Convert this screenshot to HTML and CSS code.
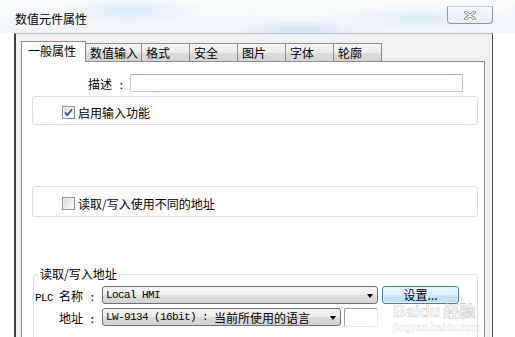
FILE: index.html
```html
<!DOCTYPE html>
<html lang="zh-CN">
<head>
    <meta charset="UTF-8">
    <title>数值元件属性</title>
    <link rel="stylesheet" href="styles.css">
</head>
<body>
<div class="titlebar">
    <div class="title">数值元件属性</div>
    <div class="close-btn">
        <svg width="12" height="9" viewBox="0 0 12 9">
            <path d="M1.5 1 L10.5 8 M10.5 1 L1.5 8" stroke="#7e848a" stroke-width="3" stroke-linecap="round"/>
            <path d="M1.5 1 L10.5 8 M10.5 1 L1.5 8" stroke="#ffffff" stroke-width="1.3" stroke-linecap="round"/>
        </svg>
    </div>
</div>

<div class="window">
    <div class="tabs">
        <div class="tab active">一般属性</div>
        <div class="tab">数值输入</div>
        <div class="tab">格式</div>
        <div class="tab">安全</div>
        <div class="tab">图片</div>
        <div class="tab">字体</div>
        <div class="tab">轮廓</div>
    </div>

    <div class="panel">
        <div class="desc-row">
            <span class="desc-label">描述<span class="mono"> :</span></span>
            <div class="textbox desc-input"></div>
        </div>

        <!-- 启用输入 -->
        <div class="group group-enable">
            <div class="check-row">
                <span class="checkbox">
                    <svg width="13" height="13" viewBox="0 0 13 13">
                        <path d="M3 6.5 L5.3 9.2 L10 3.3" fill="none" stroke="#2f4f8f" stroke-width="1.8"/>
                    </svg>
                </span>
                <span>启用输入功能</span>
            </div>
        </div>

        <div class="group group-addr">
            <div class="check-row">
                <span class="checkbox"></span>
                <span>读取/写入使用不同的地址</span>
            </div>
        </div>

        <fieldset class="addr-set">
            <legend>读取/写入地址</legend>
            <div class="field-row">
                <span class="field-label"><span class="mono">PLC </span>名称<span class="mono"> :</span></span>
                <div class="combo combo-plc"><span class="mono">Local HMI</span><i class="arrow"></i></div>
                <div class="btn-set">设置...</div>
            </div>
            <div class="field-row">
                <span class="field-label">地址<span class="mono"> :</span></span>
                <div class="combo combo-addr"><span class="mono">LW-9134 (16bit) : </span>当前所使用的语言<i class="arrow"></i></div>
                <div class="textbox addr-extra"></div>
            </div>
        </fieldset>
    </div>
</div>

<div class="watermark">
    <div class="wm-logo">Bai<span class="wm-du">du</span><span class="wm-cn">经验</span></div>
    <div class="wm-url">jingyan.baidu.com</div>
</div>
</body>
</html>
```

FILE: styles.css
```css
body {
    margin: 0;
    width: 515px;
    height: 337px;
    overflow: hidden;
    position: relative;
    background: #fff;
    font-family: "Noto Sans CJK SC", sans-serif;
    font-size: 12px;
    color: #000;
}

.mono {
    font-family: "Liberation Mono", monospace;
    font-size: 11px;
    letter-spacing: -0.6px;
    white-space: pre;
}

/* barre de titre */
.titlebar {
    position: relative;
    height: 33px;
    background:
        radial-gradient(ellipse 70px 14px at 130px 10px, rgba(178, 208, 235, 0.45), transparent),
        radial-gradient(ellipse 60px 10px at 300px 30px, rgba(170, 200, 230, 0.45), transparent),
        radial-gradient(ellipse 90px 12px at 420px 18px, rgba(200, 222, 240, 0.5), transparent),
        linear-gradient(#fbfdfe, #eef5fa);
}

.title {
    padding: 10px 0 0 15px;
    line-height: 17px;
}

.close-btn {
    position: absolute;
    left: 447px;
    top: 6px;
    width: 46px;
    height: 18px;
    box-sizing: border-box;
    border: 1px solid #8d9aa5;
    border-top-color: #c5d0d8;
    border-radius: 0 0 4px 4px;
    background: linear-gradient(#f7fafc, #e6eef4);
    display: flex;
    align-items: center;
    justify-content: center;
}

/* fenêtre */
.window {
    margin-left: 14px;
    width: 479px;
    height: 304px;
    box-sizing: border-box;
    border-top: 1px solid #b8bec4;
    border-left: 2px solid #3f3f3f;
    border-right: 1px solid #4a4a4a;
    background: #f0f0f0;
    padding: 7px 0 0 5px;
    overflow: hidden;
}

.tabs {
    display: flex;
    align-items: flex-end;
    height: 20px;
}

.tab {
    box-sizing: border-box;
    height: 18px;
    min-width: 49px;
    padding: 0 3px 0 4px;
    margin-left: -1px;
    border: 1px solid #898c95;
    border-bottom: 0;
    line-height: 17px;
    white-space: nowrap;
    background: linear-gradient(#f4f4f4, #ebebeb 50%, #dedede 51%, #d3d3d3);
}

.tab.active {
    position: relative;
    z-index: 1;
    height: 21px;
    margin-left: 0;
    margin-bottom: -1px;
    padding: 0 9px 0 6px;
    background: #fff;
}

.panel {
    width: 464px;
    height: 276px;
    box-sizing: border-box;
    border: 1px solid #898c95;
    border-bottom: 0;
    background: #fff;
    padding: 0 6px 0 10px;
    overflow: hidden;
}

.desc-row {
    display: flex;
    align-items: center;
    height: 18px;
    margin-top: 12px;
}

.desc-label {
    width: 92px;
    margin-right: 6px;
    text-align: right;
    white-space: nowrap;
}

.textbox {
    box-sizing: border-box;
    border: 1px solid #c3c7cd;
    border-top-color: #a9adb4;
    border-radius: 2px;
    background: #fff;
}

.desc-input {
    width: 333px;
    height: 18px;
}

.group {
    box-sizing: border-box;
    border: 1px solid #d5dfe5;
    border-radius: 3px;
}

.group-enable {
    height: 29px;
    margin-top: 4px;
    padding: 9px 0 0 29px;
}

.group-addr {
    height: 31px;
    margin-top: 61px;
    padding: 10px 0 0 29px;
}

.check-row {
    display: flex;
    align-items: center;
    gap: 3px;
    height: 13px;
    line-height: 13px;
    white-space: nowrap;
}

.checkbox {
    width: 13px;
    height: 13px;
    box-sizing: border-box;
    border: 1px solid #8e8f8f;
    background: linear-gradient(135deg, #d4d4d4, #f4f4f4 70%, #ffffff);
    box-shadow: inset 0 0 0 1px #f4f4f4;
    position: relative;
}

.checkbox svg {
    position: absolute;
    left: -1px;
    top: -1px;
}

.addr-set {
    margin: 50px 0 0 1px;
    padding: 5px 0 0 0;
    min-width: 0;
    height: 76px;
    box-sizing: border-box;
    border: 1px solid #d5dfe5;
    border-radius: 3px;
}

.addr-set legend {
    margin-left: 4px;
    padding: 0 2px;
    line-height: 14px;
}

.field-row {
    display: flex;
    align-items: center;
    height: 18px;
}

.field-row + .field-row {
    margin-top: 4px;
}

.field-label {
    width: 61px;
    margin-right: 7px;
    text-align: right;
    white-space: nowrap;
}

.combo {
    position: relative;
    box-sizing: border-box;
    height: 18px;
    padding-left: 3px;
    border: 1px solid #707070;
    border-radius: 3px;
    display: flex;
    align-items: center;
    white-space: nowrap;
    background: linear-gradient(#f4f4f4, #ececec 50%, #dddddd 51%, #d2d2d2);
}

.combo-plc {
    width: 276px;
}

.combo-addr {
    width: 239px;
}

.arrow {
    position: absolute;
    right: 4px;
    top: 7px;
    border-top: 4px solid #000;
    border-left: 3px solid transparent;
    border-right: 3px solid transparent;
}

.btn-set {
    box-sizing: border-box;
    width: 77px;
    height: 18px;
    margin-left: 4px;
    border: 1px solid #3c7fb1;
    border-radius: 3px;
    background: linear-gradient(#eef8fd, #dcf1fc 50%, #c7e8fb 51%, #b3def6);
    text-align: center;
    line-height: 15px;
    box-shadow: inset 0 0 0 1px rgba(255, 255, 255, 0.6);
}

.addr-extra {
    width: 34px;
    height: 19px;
    margin-left: 3px;
    border-color: #9a9ea5 #e3e9ef #e3e9ef #9a9ea5;
}

/* filigrane */
.watermark {
    position: absolute;
    left: 393px;
    top: 303px;
    color: rgba(255, 255, 255, 0.75);
    -webkit-text-stroke: 0.6px rgba(150, 150, 150, 0.55);
    pointer-events: none;
}

.wm-logo {
    font-family: "Liberation Sans", sans-serif;
    font-size: 17px;
    font-weight: bold;
    line-height: 14px;
    white-space: nowrap;
}

.wm-cn {
    margin-left: 3px;
    font-family: "Noto Sans CJK SC", sans-serif;
    font-size: 16px;
}

.wm-url {
    margin-top: 3px;
    font-family: "Liberation Sans", sans-serif;
    font-size: 10px;
    line-height: 12px;
    font-weight: bold;
    color: rgba(255, 255, 255, 0.6);
    -webkit-text-stroke: 0.3px rgba(170, 170, 170, 0.55);
}
```
